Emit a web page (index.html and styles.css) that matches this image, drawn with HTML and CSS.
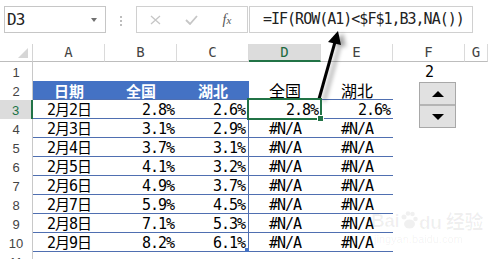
FILE: index.html
```html
<!DOCTYPE html>
<html lang="zh-CN">
<head>
    <meta charset="UTF-8">
    <meta name="viewport" content="width=device-width, initial-scale=1.0">
    <title>动态图表 - 辅助列</title>
    <link rel="stylesheet" href="styles.css">
</head>
<body>
    <div class="toolbar">
        <div class="name-box"><span>D3</span><span class="drop"></span></div>
        <div class="dots"><i></i><i></i><i></i></div>
        <div class="fx-buttons">
            <span class="tool">
                <svg width="11" height="10" viewBox="0 0 11 10"><path d="M1 1L10 9M10 1L1 9" stroke="#c6c6c6" stroke-width="1.3" fill="none"/></svg>
            </span>
            <span class="tool">
                <svg width="13" height="10" viewBox="0 0 13 10"><path d="M1 5L5 9L12 1" stroke="#c6c6c6" stroke-width="1.8" fill="none"/></svg>
            </span>
            <span class="tool fx">f<small>x</small></span>
        </div>
        <div class="formula">=IF(ROW(A1)&lt;$F$1,B3,NA())</div>
    </div>

    <div class="sheet" id="sheet"></div>

    <div class="spinner">
        <button class="up" onclick="stepLimit(1)"></button>
        <button class="down" onclick="stepLimit(-1)"></button>
    </div>

    <svg class="arrow" width="488" height="259" viewBox="0 0 488 259">
        <defs>
            <filter id="shadow" x="-50%" y="-20%" width="200%" height="140%">
                <feDropShadow dx="5" dy="2" stdDeviation="2" flood-color="#000" flood-opacity="0.35"/>
            </filter>
        </defs>
        <g filter="url(#shadow)">
            <line x1="319" y1="99" x2="335" y2="42" stroke="#000" stroke-width="3"/>
            <polygon points="338,31 341,45 328,42" fill="#000"/>
        </g>
    </svg>

    <div class="watermark">
        <div class="wm-logo">Bai<svg width="18" height="20" viewBox="0 0 18 20"><circle cx="4" cy="6" r="2.5"/><circle cx="8" cy="2.5" r="2.3"/><circle cx="12.5" cy="3" r="2.3"/><circle cx="15.5" cy="8" r="2.3"/><ellipse cx="9.5" cy="13" rx="5.5" ry="4.5"/></svg>du 经验</div>
        <div class="wm-url">jingyan.baidu.com</div>
    </div>

    <script>
        const sheet = document.getElementById("sheet");
        const cols = ["A", "B", "C", "D", "E", "F", "G"];
        const dates = ["2月2日", "2月3日", "2月4日", "2月5日", "2月6日", "2月7日", "2月8日", "2月9日"];
        const national = [2.8, 3.1, 3.7, 4.1, 4.9, 5.9, 7.1, 8.2];
        const hubei = [2.6, 2.9, 3.1, 3.2, 3.7, 4.5, 5.3, 6.1];
        let limit = 2;

        function pct(v) {
            return v.toFixed(1) + "%";
        }

        function addCell(text, cls) {
            let cell = document.createElement("div");
            cell.className = "cell " + cls;
            cell.textContent = text;
            sheet.appendChild(cell);
        }

        function renderSheet() {
            sheet.innerHTML = "";
            addCell("", "corner");
            cols.forEach(c => addCell(c, c === "D" ? "col-head active" : "col-head"));

            for (let r = 1; r <= 11; r++) {
                addCell(r, r === 3 ? "row-head active" : "row-head");
                for (let c = 0; c < cols.length; c++) {
                    let text = "";
                    let cls = "";
                    let i = r - 3;
                    if (r === 1 && c === 5) {
                        text = limit;
                        cls = "center";
                    } else if (r === 2 && c < 3) {
                        text = ["日期", "全国", "湖北"][c];
                        cls = "tbl th";
                    } else if (r === 2 && c < 5) {
                        text = c === 3 ? "全国" : "湖北";
                        cls = "tbl title";
                    } else if (r >= 3 && r <= 10 && c < 5) {
                        cls = "tbl";
                        if (c === 0) { text = dates[i]; cls += " center"; }
                        if (c === 1) { text = pct(national[i]); cls += " num"; }
                        if (c === 2) { text = pct(hubei[i]); cls += " num edge"; }
                        if (c >= 3) {
                            let src = c === 3 ? national : hubei;
                            if (i + 1 < limit) { text = pct(src[i]); cls += " num"; }
                            else { text = "#N/A"; cls += " center"; }
                        }
                        if (r === 3 && c === 3) cls += " sel";
                        if (r === 10 && c === 2) cls += " handle";
                    }
                    addCell(text, cls);
                }
            }
        }

        function stepLimit(d) {
            limit = Math.min(9, Math.max(1, limit + d));
            renderSheet();
        }

        renderSheet();
    </script>
</body>
</html>
```

FILE: styles.css
```css
body {
    margin: 0;
    width: 488px;
    height: 259px;
    overflow: hidden;
    position: relative;
    background: #fff;
    color: #000;
    font-family: "DejaVu Sans Mono", "Noto Sans CJK SC", monospace;
}

/* formula bar */
.toolbar {
    display: flex;
    align-items: flex-start;
    height: 44px;
    box-sizing: border-box;
    padding: 6px 0 0 4px;
}
.name-box {
    width: 102px;
    height: 27px;
    box-sizing: border-box;
    border: 1px solid #c6c6c6;
    display: flex;
    align-items: center;
    justify-content: space-between;
    padding: 0 8px 0 2px;
    font-size: 16px;
    letter-spacing: -1px;
    color: #222;
}
.drop {
    border-left: 3px solid transparent;
    border-right: 3px solid transparent;
    border-top: 4px solid #707070;
}
.dots {
    width: 30px;
    display: flex;
    flex-direction: column;
    align-items: center;
    gap: 2px;
    padding-top: 10px;
}
.dots i {
    width: 2px;
    height: 2px;
    background: #bdbdbd;
}
.fx-buttons {
    width: 112px;
    height: 27px;
    box-sizing: border-box;
    border: 1px solid #d0d0d0;
    display: flex;
    align-items: center;
}
.tool {
    width: 36px;
    display: flex;
    justify-content: center;
    align-items: center;
}
.fx {
    font-family: "Liberation Serif", serif;
    font-style: italic;
    font-size: 14px;
    color: #555;
    letter-spacing: 0;
}
.fx small {
    font-size: 11px;
}
.formula {
    width: 224px;
    height: 27px;
    margin-left: 1px;
    box-sizing: border-box;
    border: 1px solid #d0d0d0;
    padding-left: 13px;
    font-size: 15px;
    letter-spacing: -1px;
    line-height: 25px;
    color: #222;
    white-space: nowrap;
}

/* worksheet */
.sheet {
    display: grid;
    grid-template-columns: 33px repeat(6, 72px) 23px;
    grid-template-rows: 18px;
    grid-auto-rows: 19px;
}
.cell {
    box-sizing: border-box;
    overflow: hidden;
    white-space: nowrap;
    font-size: 15px;
    letter-spacing: -1px;
    line-height: 17px;
    padding-top: 2px;
}
.corner {
    position: relative;
    border-right: 1px solid #d4d4d4;
    border-bottom: 1px solid #bdbdbd;
}
.corner::after {
    content: "";
    position: absolute;
    right: 4px;
    bottom: 3px;
    border-left: 10px solid transparent;
    border-bottom: 10px solid #d6d6d6;
}
.col-head {
    font-size: 14px;
    letter-spacing: 0;
    padding-top: 0;
    text-align: center;
    color: #444;
    border-right: 1px solid #dadada;
    border-bottom: 1px solid #bdbdbd;
}
.col-head.active {
    background: #dcdcdc;
    color: #1e6b41;
    border-bottom: 2px solid #217346;
}
.row-head {
    font-family: "Liberation Sans", sans-serif;
    font-size: 13px;
    letter-spacing: 0;
    text-align: center;
    color: #444;
    border-right: 1px solid #c8c8c8;
}
.row-head.active {
    background: #dcdcdc;
    color: #217346;
    border-right: 2px solid #217346;
}
.center { text-align: center; }
.num {
    text-align: right;
    padding-right: 3px;
}
.tbl { border-bottom: 1px solid #4f6fb1; }
.th {
    background: #4472c4;
    color: #fff;
    font-family: "Noto Sans CJK SC", sans-serif;
    font-weight: 700;
    font-size: 15px;
    letter-spacing: 0;
    line-height: 17px;
    padding-top: 1px;
    overflow: visible;
    text-align: center;
}
.title {
    font-family: "Noto Sans CJK SC", sans-serif;
    font-size: 16px;
    letter-spacing: 0;
    line-height: 17px;
    padding-top: 1px;
    overflow: visible;
    text-align: center;
}
.edge { border-right: 1px solid #4f6fb1; }
.sel {
    position: relative;
    overflow: visible;
    z-index: 2;
}
.sel::after {
    content: "";
    position: absolute;
    left: -2px;
    top: -2px;
    right: -1px;
    bottom: -2px;
    border: 2px solid #217346;
}
.sel::before {
    content: "";
    position: absolute;
    right: -3px;
    bottom: -4px;
    width: 5px;
    height: 5px;
    background: #217346;
    border: 1px solid #fff;
    z-index: 1;
}
.handle {
    position: relative;
    overflow: visible;
}
.handle::after {
    content: "";
    position: absolute;
    right: -1px;
    bottom: -1px;
    width: 4px;
    height: 4px;
    background: #4472c4;
}

/* spin button form control */
.spinner {
    position: absolute;
    left: 419px;
    top: 82px;
    width: 37px;
    height: 46px;
    box-sizing: border-box;
    border: 1px solid #a8a8a8;
    background: #e1e1e1;
    display: flex;
    flex-direction: column;
}
.spinner button {
    flex: 1;
    border: 0;
    padding: 0;
    background: #e1e1e1;
    display: flex;
    align-items: center;
    justify-content: center;
    cursor: pointer;
}
.spinner .down {
    border-top: 2px solid #b4b4b4;
}
.spinner .up::before {
    content: "";
    border-left: 6px solid transparent;
    border-right: 6px solid transparent;
    border-bottom: 6px solid #000;
}
.spinner .down::before {
    content: "";
    border-left: 6px solid transparent;
    border-right: 6px solid transparent;
    border-top: 6px solid #000;
}

.arrow {
    position: absolute;
    left: 0;
    top: 0;
    pointer-events: none;
}

.watermark {
    position: absolute;
    left: 371px;
    top: 207px;
    color: rgba(0, 0, 0, 0.06);
    font-family: "Liberation Sans", "Noto Sans CJK SC", sans-serif;
    pointer-events: none;
}
.wm-logo {
    display: flex;
    align-items: center;
    font-size: 19px;
    font-weight: 700;
    letter-spacing: -0.5px;
}
.wm-logo svg {
    fill: rgba(0, 0, 0, 0.06);
    margin: 0 1px;
}
.wm-url {
    font-size: 11px;
    margin-top: -1px;
    padding-left: 3px;
}
```
